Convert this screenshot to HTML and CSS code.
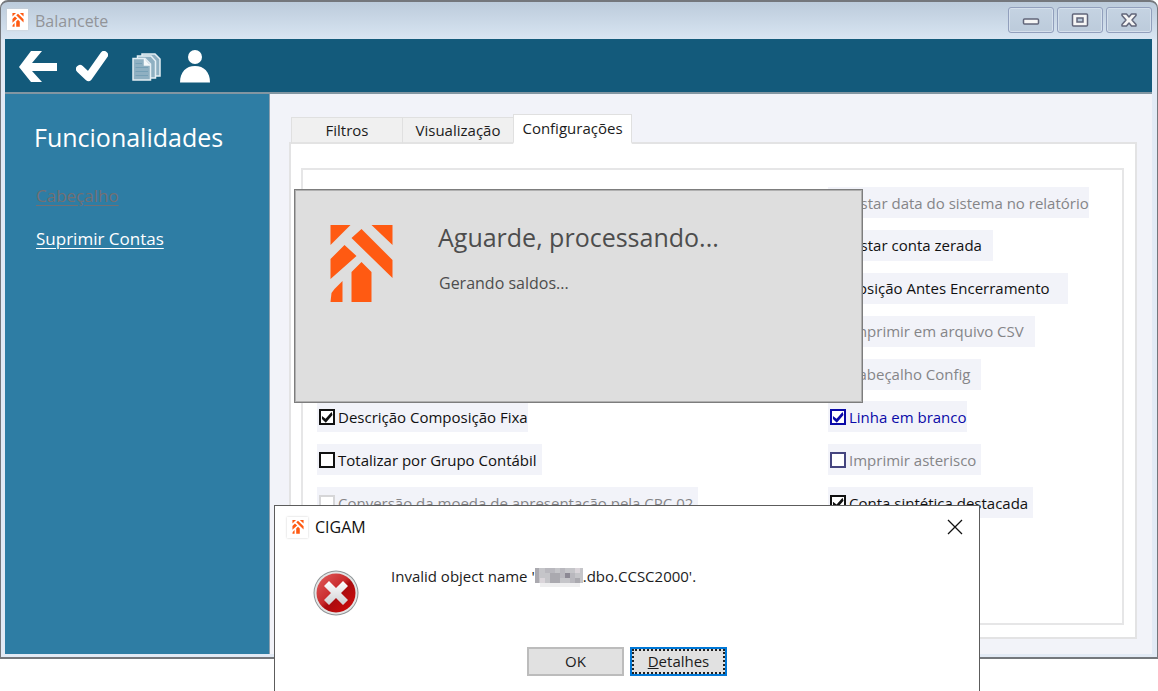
FILE: index.html
```html
<!DOCTYPE html>
<html lang="pt-BR">
<head>
<meta charset="utf-8">
<title>Balancete</title>
<link rel="stylesheet" href="styles.css">
</head>
<body>
<svg class="defs" aria-hidden="true">
  <defs>
    <symbol id="logo" viewBox="0 0 62 78">
      <path fill="#ff5a12" d="M0 0H20L0 20ZM41 0H62V20ZM31 4L62 35V53L21 13ZM14 20L26 31L0 54V34ZM31 37L41 47V77H21V47ZM12 56V77H0L1 68L4 64Z"/>
    </symbol>
    <linearGradient id="red" x1="0" y1="0" x2="1" y2="1">
      <stop offset="0" stop-color="#e2605f"/>
      <stop offset=".45" stop-color="#c92b2d"/>
      <stop offset=".55" stop-color="#a90b0e"/>
      <stop offset="1" stop-color="#d60d0d"/>
    </linearGradient>
    <linearGradient id="cross" x1="0" y1="0" x2="0" y2="1">
      <stop offset="0" stop-color="#ffffff"/>
      <stop offset="1" stop-color="#cfcfd2"/>
    </linearGradient>
  </defs>
</svg>

<div class="window">
  <header class="titlebar">
    <span class="app-icon"><svg class="app-logo"><use href="#logo"/></svg></span>
    <h1 class="title">Balancete</h1>
    <div class="controls">
      <button class="control" type="button" aria-label="Minimizar"><svg width="20" height="16" viewBox="0 0 20 16"><rect x="2.500" y="7" width="15" height="5" rx="1" fill="#f5f5f5" stroke="#62667a" stroke-width="1.500"/></svg></button>
      <button class="control" type="button" aria-label="Maximizar"><svg width="20" height="16" viewBox="0 0 20 16"><rect x="2.500" y="2" width="15" height="12" rx="1" fill="#f5f5f5" stroke="#62667a" stroke-width="1.500"/><rect x="7" y="6" width="6" height="4" fill="#b9c9da" stroke="#62667a" stroke-width="1.500"/></svg></button>
      <button class="control" type="button" aria-label="Fechar"><svg width="20" height="16" viewBox="0 0 20 16"><path d="M3 2H7.500L10 5L12.500 2H17V3.500L13 8L17 12.500V14H12.500L10 11L7.500 14H3V12.500L7 8L3 3.500Z" fill="#f5f5f5" stroke="#62667a" stroke-width="1.500" stroke-linejoin="round"/></svg></button>
    </div>
  </header>

  <div class="client">
    <nav class="toolbar">
      <button class="tool tool-back" type="button" aria-label="Voltar"><svg width="38" height="32" viewBox="0 0 38 32"><path fill="#fff" d="M12 0H23L13 12H38V20H13L23 31H12L0 16Z"/></svg></button>
      <button class="tool tool-ok" type="button" aria-label="Confirmar"><svg width="32" height="31" viewBox="0 0 32 31"><path fill="none" stroke="#fff" stroke-width="8" stroke-linecap="round" stroke-linejoin="round" d="M4 18L12.500 26L28 4"/></svg></button>
      <button class="tool tool-copy" type="button" aria-label="Copiar"><svg width="29" height="28" viewBox="0 0 29 28">
        <g fill="#8fb0c2" stroke="#e4eef4" stroke-width="1.500"><path d="M10 1H23L28 6V23H10Z"/><path d="M5.500 3H19L23.500 8V25H5.500Z"/><path d="M1 5.500H13L18.500 11V27H1Z"/></g>
        <path d="M12.500 6V12H18" fill="#f4f8fa" stroke="#f4f8fa" stroke-width="1.500"/>
        <path d="M3.500 10.500H10M3.500 14.500H16M3.500 18.500H16M3.500 22.500H16" stroke="#76a0b6" stroke-width="1"/></svg></button>
      <button class="tool tool-user" type="button" aria-label="Usuário"><svg width="30" height="33" viewBox="0 0 30 33"><circle cx="15" cy="7" r="7" fill="#fff"/><path fill="#fff" d="M0 32.500C0 22 6 16 15 16S30 22 30 32.500Z"/></svg></button>
    </nav>

    <div class="body">
      <aside class="sidebar">
        <h2 class="side-title">Funcionalidades</h2>
        <a class="side-link side-link-off" href="#">Cabeçalho</a>
        <a class="side-link" href="#">Suprimir Contas</a>
      </aside>

      <main class="main">
        <div class="tabs" role="tablist">
          <button class="tab" type="button" role="tab">Filtros</button>
          <button class="tab" type="button" role="tab">Visualização</button>
          <button class="tab tab-active" type="button" role="tab" aria-selected="true">Configurações</button>
        </div>
        <div class="panel">
          <div class="group">
            <div class="column column-left">
              <label class="option option-w0"><input class="check" type="checkbox" checked>Descrição Composição Fixa</label>
              <label class="option option-w1"><input class="check" type="checkbox">Totalizar por Grupo Contábil</label>
              <label class="option option-off option-w1"><input class="check check-off" type="checkbox" disabled>Conversão da moeda de apresentação pela CPC 02</label>
            </div>
            <div class="column">
              <label class="option option-off option-w0"><input class="check check-off" type="checkbox" disabled>Listar data do sistema no relatório</label>
              <label class="option option-w2"><input class="check" type="checkbox">Listar conta zerada</label>
              <label class="option option-w3"><input class="check" type="checkbox">Posição Antes Encerramento</label>
              <label class="option option-off option-w2"><input class="check check-off" type="checkbox" disabled>Imprimir em arquivo CSV</label>
              <label class="option option-off option-w2"><input class="check check-off" type="checkbox" disabled>Cabeçalho Config</label>
              <label class="option option-blue option-w0"><input class="check" type="checkbox" checked>Linha em branco</label>
              <label class="option option-off option-w1"><input class="check check-navy" type="checkbox" disabled>Imprimir asterisco</label>
              <label class="option option-w1"><input class="check" type="checkbox" checked>Conta sintética destacada</label>
            </div>
          </div>
        </div>
      </main>
    </div>
  </div>
</div>

<section class="progress" role="status">
  <svg class="progress-logo"><use href="#logo"/></svg>
  <div class="progress-text">
    <h2 class="progress-title">Aguarde, processando...</h2>
    <p class="progress-note">Gerando saldos...</p>
  </div>
</section>

<section class="dialog" role="alertdialog" aria-labelledby="dialog-title">
  <header class="dialog-bar">
    <span class="app-icon"><svg class="app-logo"><use href="#logo"/></svg></span>
    <h2 class="dialog-title" id="dialog-title">CIGAM</h2>
    <button class="dialog-close" type="button" aria-label="Fechar"><svg width="16" height="16" viewBox="0 0 16 16"><path d="M1 1L15 15M15 1L1 15" stroke="#111" stroke-width="1.300"/></svg></button>
  </header>
  <div class="dialog-body">
    <svg class="error-icon" width="46" height="46" viewBox="0 0 46 46">
      <circle cx="23" cy="23" r="22.500" fill="#8f9496"/><circle cx="23" cy="23" r="21.500" fill="#e3e5e5"/><circle cx="23" cy="23" r="19.500" fill="url(#red)"/>
      <path fill="url(#cross)" d="M16 11L23 18L30 11L35 16L28 23L35 30L30 35L23 28L16 35L11 30L18 23L11 16Z"/>
    </svg>
    <p class="message">Invalid object name '<svg class="mosaic" width="48" height="19" viewBox="0 0 48 19" aria-hidden="true">
      <path fill="#c5c5c9" d="M0 0H48V15H0Z"/>
      <path fill="#aaa9af" d="M0 0H4V15H0ZM15 5H25V15H15ZM40 10H45V15H40Z"/>
      <path fill="#b9b8be" d="M10 0H20V5H10ZM25 0H30V10H25ZM35 5H40V15H35Z"/>
      <path fill="#8c8994" d="M30 5H35V10H30Z"/>
      <path fill="#dad5da" d="M40 0H45V5H40ZM5 10H10V15H5Z"/>
      <path fill="#eeeeef" d="M5 15H45V19H5Z"/>
    </svg>.dbo.CCSC2000'.</p>
  </div>
  <footer class="dialog-actions">
    <button class="button" type="button">OK</button>
    <button class="button button-focus" type="button"><span class="focus-ring"><u>D</u>etalhes</span></button>
  </footer>
</section>
</body>
</html>
```
FILE: styles.css
```css
* { box-sizing: border-box; }

body {
  margin: 0;
  position: relative;
  min-height: 100vh;
  overflow: hidden;
  background: #fff;
  color: #1c1c1c;
  font: 16px/20px "Open Sans", "Noto Sans", sans-serif;
}

h1, h2, p { margin: 0; font-weight: 400; }
button { padding: 0; border: 0; background: none; color: inherit; font: inherit; }
svg { display: block; }
.defs { position: absolute; width: 0; height: 0; }

.window {
  display: flex;
  flex-direction: column;
  min-height: calc(100vh - 32px);
  padding: 0 5px 3px 4px;
  border: 1px solid #74777c;
  border-top-width: 2px;
  border-bottom-width: 2px;
  border-radius: 8px 8px 0 0;
  background: linear-gradient(#bccbdb, #d8e5f2 37px, #e2eaf5 38px);
}

.titlebar { display: flex; align-items: center; height: 37px; padding: 0 0 2px 2px; }
.app-icon {
  display: grid;
  place-items: center;
  width: 21px;
  height: 21px;
  background: #fff;
  box-shadow: 0 0 2px #ccc;
}
.app-logo { width: 12px; height: 14px; }
.title { margin-left: 7px; color: #929499; font-size: 16px; line-height: 22px; padding-top: 2px; }
.controls { display: flex; gap: 3px; margin-left: auto; }
.control {
  display: grid;
  place-items: center;
  width: 46px;
  height: 26px;
  border: 1px solid #919fbc;
  border-radius: 3px;
  background: linear-gradient(#c5d3e2, #bccbdb);
  box-shadow: inset 0 0 0 1px #d5e0ec;
}

.client { flex: 1; display: flex; flex-direction: column; background: #f2f3f9; }
.toolbar {
  display: flex;
  align-items: center;
  height: 55px;
  padding: 2px 0 0 14px;
  border-bottom: 2px solid #8296a2;
  background: #135a7b;
}
.tool-ok { margin-left: 19px; }
.tool-copy { margin-left: 24px; }
.tool-user { margin-left: 19px; }

.body { flex: 1; display: flex; }
.sidebar {
  flex: none;
  display: flex;
  flex-direction: column;
  align-items: flex-start;
  width: 265px;
  padding: 27px 29px;
  border-right: 1px solid #8a9fae;
  background: #2e7da4;
}
.side-title { margin-bottom: 33px; color: #fff; font-size: 25px; line-height: 32px; }
.side-link { margin: 0 0 23px 2px; color: #fff; font-size: 17px; text-underline-offset: 3px; }
.side-link-off { color: #746f72; }

.main { flex: 1; display: flex; flex-direction: column; padding: 20px 15px 15px 19px; }
.tabs { position: relative; display: flex; align-items: flex-end; margin: 0 0 -2px 2px; }
.tab {
  width: 111px;
  height: 27px;
  border: 1px solid #e0e0e0;
  border-right: 0;
  border-bottom: 2px solid #e3e3e3;
  background: #f0f0f0;
  font-size: 15px;
}
.tab-active {
  width: 119px;
  height: 30px;
  padding-bottom: 2px;
  border-right: 1px solid #e0e0e0;
  border-bottom: 2px solid #fff;
  background: #fff;
}
.panel {
  flex: 1;
  display: flex;
  padding: 24px 11px 12px 10px;
  border: 2px solid #e3e3e4;
  background: #fff;
}
.group {
  flex: 1;
  display: grid;
  grid-template-columns: 511px 1fr;
  padding: 17px 0 93px 14px;
  border: 2px solid #e6e6e7;
}
.column { display: grid; grid-template-rows: repeat(8, 1fr); justify-items: start; }
.column-left { grid-template-rows: 5fr repeat(3, 1fr); }
.column-left::before { content: ""; }
.option {
  display: flex;
  align-items: center;
  gap: 3px;
  height: 31px;
  padding: 0 2px;
  background: #f2f3f9;
  color: #111;
  font-size: 15px;
  white-space: nowrap;
}
.option-w0 { padding-right: 0; }
.option-w1 { padding-right: 5px; }
.option-w2 { padding-right: 11px; }
.option-w3 { padding-right: 18px; }
.option-off { color: #858588; }
.option-blue { color: #0a0aa8; }
.check {
  appearance: none;
  flex: none;
  width: 16px;
  height: 16px;
  margin: 0;
  border: 2px solid currentColor;
  background: #fff;
  color: inherit;
}
.check:checked::before {
  content: "";
  display: block;
  width: 12px;
  height: 12px;
  background: currentColor;
  clip-path: polygon(8% 42%, 38% 65%, 88% 10%, 96% 35%, 40% 98%, 8% 68%);
}
.check-off { border-color: #d6d6d8; }
.check-navy { border-color: #45457f; }

.progress {
  position: absolute;
  left: 294px;
  top: 189px;
  display: flex;
  align-items: flex-start;
  gap: 45px;
  width: 569px;
  height: 214px;
  padding: 35px;
  border: 1px solid #7d7d7d;
  box-shadow: inset 0 0 0 1px #b0b0b0;
  background: #dedede;
  color: #4d4d4d;
}
.progress-logo { width: 63px; height: 78px; }
.progress-title { margin-bottom: 24px; font-size: 25px; line-height: 24px; }
.progress-note { font-size: 16px; padding-left: 1px; }

.dialog {
  position: absolute;
  left: 274px;
  top: 505px;
  bottom: 0;
  width: 706px;
  border: 1px solid #5c5c5c;
  border-bottom: 0;
  background: #fff;
}
.dialog-bar { display: flex; align-items: center; height: 42px; padding: 0 16px 0 12px; }
.dialog-title { margin-left: 7px; font-size: 16px; color: #111; }
.dialog-close { margin-left: auto; }
.dialog-body { display: flex; align-items: flex-start; gap: 32px; padding: 22px 38px 0; }
.message { display: flex; font-size: 15px; line-height: 20px; margin-top: -4px; white-space: pre; }
.mosaic { margin-top: 2px; }
.dialog-actions { display: flex; justify-content: center; gap: 6px; padding-top: 31px; }
.button {
  width: 97px;
  height: 29px;
  padding-bottom: 2px;
  border: 2px solid #bcbcbc;
  background: #e1e1e1;
  font-size: 15px;
}
.button-focus { padding: 0; border-color: #0078d7; }
.focus-ring { display: block; height: 25px; border: 2px dotted #222; line-height: 20px; }
```
